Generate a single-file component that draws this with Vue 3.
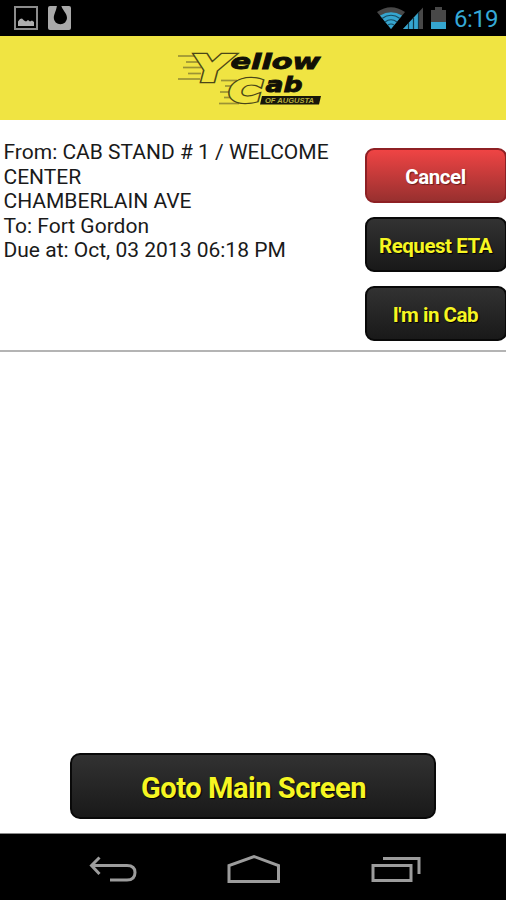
<script setup>
import { ref } from 'vue'

const time = ref('6:19')

const booking = ref([
  'From: CAB STAND # 1 / WELCOME CENTER',
  'CHAMBERLAIN AVE',
  'To: Fort Gordon',
  'Due at: Oct, 03 2013 06:18 PM',
])

const actions = [
  { label: 'Cancel', type: 'cancel' },
  { label: 'Request ETA', type: 'eta' },
  { label: "I'm in Cab", type: 'incab' },
]

// speed lines behind the two big logo letters: x, y, width
const speedLines = [
  [8, 12, 19], [16, 18, 12], [13, 23.5, 18], [18, 29.5, 13], [8, 35, 22],
  [51, 36.5, 16], [55, 42, 9], [50, 48, 12], [54, 53.5, 9], [49, 59.5, 20],
]
</script>

<template>
  <div class="screen">
    <div class="status-bar">
      <svg class="notify" width="60" height="28" viewBox="0 0 60 28">
        <rect x="1" y="3" width="22" height="22" fill="none" stroke="#8c8c8c" stroke-width="2" />
        <path d="M4 22V17.500l2-2.500 2-.5 2 2 2 1 2-1.500 2 1.500 2-1 2 1.500V22z" fill="#adadad" />
        <rect x="34" y="2" width="23" height="24" rx="2" fill="#a9a9a9" />
        <path d="M43 0h4C47.500 6 53 8.500 53 14a6.600 6.200 0 0 1-13.200 0C39.800 9.500 43 6 43 0z" fill="#000" />
      </svg>
      <div class="status-right">
        <svg width="72" height="28" viewBox="0 0 72 28">
          <path d="M0 8Q14 -1.500 28 8L14 25z" fill="#484848" />
          <path d="M3 11.500Q14 5 25 11.500L14 25z" fill="#35a5cf" />
          <path d="M5 14.500Q14 8 23 14.500M8 18Q14 13.500 20 18M11 21Q14 19 17 21" fill="none" stroke="#164a60" stroke-width="1.200" />
          <path d="M26 25L46 3.500V25z" fill="#484848" />
          <path d="M26 25L41 9V25z" fill="#35a5cf" />
          <path d="M31.500 19v6M36.500 14v11M41.500 8v17" stroke="#10394a" stroke-width="1.200" />
          <path d="M54 6h4V3h7v3h4v19H54z" fill="#484848" />
          <path d="M54 18h15v7H54z" fill="#35a5cf" />
        </svg>
        <span class="time">{{ time }}</span>
      </div>
    </div>

    <div class="header">
      <svg class="logo" width="160" height="70" viewBox="0 0 160 70">
        <path v-for="(l, i) in speedLines" :key="i" :d="`M${l[0]} ${l[1]}h${l[2]}`" class="speed" />
        <!-- dark pass first, then a thinner yellow pass leaves an outline -->
        <g v-for="pass in ['outline', 'inner']" :key="pass" :class="['big', pass]">
          <text x="23" y="36.500" font-size="36" textLength="36" lengthAdjust="spacingAndGlyphs">Y</text>
          <text x="59.500" y="57.500" font-size="32" textLength="32" lengthAdjust="spacingAndGlyphs">C</text>
        </g>
        <text x="60.500" y="24.500" class="word" font-size="21.500" textLength="90" lengthAdjust="spacingAndGlyphs">ellow</text>
        <text x="95.500" y="47.500" class="word" font-size="21.500" textLength="37" lengthAdjust="spacingAndGlyphs">ab</text>
        <path d="M92 52H151L149 60.500H90z" fill="#17160a" />
        <text x="95" y="58.800" class="small" font-size="7" textLength="49" lengthAdjust="spacingAndGlyphs">OF AUGUSTA</text>
      </svg>
    </div>

    <div class="booking">
      <div class="info">
        <p v-for="line in booking" :key="line">{{ line }}</p>
      </div>
      <div class="actions">
        <button v-for="a in actions" :key="a.type" :class="['btn', a.type]">{{ a.label }}</button>
      </div>
    </div>

    <div class="footer">
      <button class="btn main-btn">Goto Main Screen</button>
    </div>

    <div class="nav-bar">
      <svg width="48" height="28" viewBox="0 0 48 28">
        <path d="M10.500 2.500L2.500 10.500L10.500 19M3 10.500H38Q46 10.500 46 17.500Q46 25 38 25H21" />
      </svg>
      <svg width="54" height="30" viewBox="0 0 54 30">
        <path d="M2 27.500V11.500L27 2.500L51.500 11.500V27.500z" />
      </svg>
      <svg width="50" height="28" viewBox="0 0 50 28">
        <path d="M2 10.500H40V25.500H2zM12 3.500H48V19" />
      </svg>
    </div>
  </div>
</template>

<style>
body { background: #fff; }
</style>

<style scoped>
.screen {
  display: flex;
  flex-direction: column;
  width: 506px;
  height: 900px;
  overflow: hidden;
  background: #fff;
  font-family: Roboto, sans-serif;
}

.status-bar { display: flex; justify-content: space-between; height: 36px; box-sizing: border-box; padding: 4px 8px 0 14px; background: #000; }
.status-right { display: flex; width: 121px; justify-content: space-between; }
.time { color: #35a9d6; font-size: 24px; line-height: 30px; letter-spacing: -0.6px; }

.header { display: flex; justify-content: center; height: 84px; background: #f0e442; }
.logo { margin: 8px 6px 0 0; }
.speed { stroke: #9b9334; stroke-width: 1.7; fill: none; }
.big text { font-family: "DejaVu Sans", sans-serif; font-weight: bold; font-style: italic; }
.outline text { fill: #4a4618; stroke: #4a4618; stroke-width: 4.4; }
.inner text { fill: #f0e442; stroke: #f0e442; stroke-width: 2; }
.word { font-family: "DejaVu Sans", sans-serif; font-weight: bold; font-style: italic; fill: #111006; stroke: #111006; stroke-width: 0.9; }
.small { font-family: "Liberation Sans", sans-serif; font-weight: bold; font-style: italic; fill: #b5ad3c; }

.booking {
  display: flex;
  justify-content: space-between;
  height: 232px;
  box-sizing: border-box;
  padding-top: 20px;
  border-bottom: 2px solid #b4b4b4;
}
.info { width: 345px; padding-left: 3.5px; font-size: 21px; line-height: 24.5px; color: #1a1a1a; }
.info p { margin: 0; }

.actions { display: flex; flex-direction: column; gap: 14px; width: 142px; margin-right: -0.5px; padding-top: 8px; }

.btn {
  box-sizing: border-box;
  height: 55px;
  padding: 2px 0 0;
  border: 2px solid #090909;
  border-radius: 9px;
  background: linear-gradient(#323232, #191919);
  color: #f6f622;
  font-family: Roboto, sans-serif;
  font-size: 20.5px;
  font-weight: bold;
  letter-spacing: -0.45px;
  text-shadow: 1px 1px 1px #000;
}
.cancel { border-color: #8e2024; background: linear-gradient(#ef4444, #98302f); color: #fff; text-shadow: 1px 1px 1px #6a1c1c; }

.footer { display: flex; flex: 1; align-items: flex-end; padding: 0 70px 14px; }
.main-btn { width: 367px; height: 66px; padding: 3px 0 0 1px; border-radius: 10px; font-size: 29px; }

.nav-bar { display: flex; justify-content: space-between; align-items: center; height: 67px; box-sizing: border-box; padding: 3px 85px 0 89px; border-top: 1px solid #8a8a8a; background: #000; }
.nav-bar path { fill: none; stroke: #9c9c9c; stroke-width: 3; }
</style>
